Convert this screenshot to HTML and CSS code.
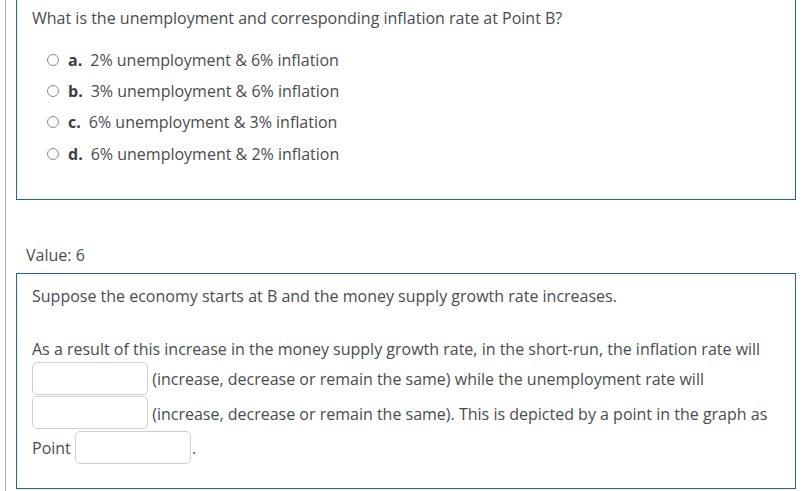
FILE: index.html
```html
<!DOCTYPE html>
<html>
<head>
<meta charset="utf-8">
<link rel="stylesheet" href="styles.css">
</head>
<body>
<div class="page">
  <div class="card card-top">
    <div class="question">What is the unemployment and corresponding inflation rate at Point B?</div>
    <div class="options">
      <div class="option"><span class="radio"></span><span class="letter">a.</span><span>2% unemployment &amp; 6% inflation</span></div>
      <div class="option"><span class="radio"></span><span class="letter">b.</span><span>3% unemployment &amp; 6% inflation</span></div>
      <div class="option"><span class="radio"></span><span class="letter">c.</span><span>6% unemployment &amp; 3% inflation</span></div>
      <div class="option"><span class="radio"></span><span class="letter">d.</span><span>6% unemployment &amp; 2% inflation</span></div>
    </div>
  </div>
  <div class="value">Value: 6</div>
  <div class="card card-bottom">
    <p class="para">Suppose the economy starts at B and the money supply growth rate increases.</p>
    <p class="para fill">As a result of this increase in the money supply growth rate, in the short-run, the inflation rate will <span class="blank"></span> (increase, decrease or remain the same) while the unemployment rate will <span class="blank"></span> (increase, decrease or remain the same). This is depicted by a point in the graph as Point <span class="blank"></span><span class="dot">.</span></p>
  </div>
</div>
</body>
</html>
```

FILE: styles.css
```css
html, body {
  margin: 0;
  padding: 0;
  background: #ffffff;
}
body {
  font-family: "Open Sans", "Liberation Sans", sans-serif;
  font-size: 16px;
  line-height: 22px;
  color: #494c4e;
}
.page {
  margin-left: 5px;
  width: 791px;
  border-left: 1px solid #a9a9a9;
  padding-left: 10px;
  min-height: 491px;
  box-sizing: border-box;
}
.card {
  width: 780px;
  box-sizing: border-box;
  border: 1px solid #1f63a1;
}
.card-top {
  border-top: none;
  padding: 7px 15px 30px 15px;
}
.question {
  height: 22px;
}
.options {
  margin-top: 15px;
  padding-left: 15px;
}
.option {
  display: flex;
  align-items: center;
  height: 31.33px;
}
.radio {
  width: 10px;
  height: 10px;
  border: 1px solid #8a8a8a;
  border-radius: 50%;
  background: #fff;
  margin-right: 9px;
  flex: none;
}
.letter {
  font-weight: 700;
  color: #3c3e40;
  margin-right: 8px;
}
.value {
  margin: 44px 0 7px 10px;
  height: 22px;
}
.card-bottom {
  padding: 11px 15px 24px 15px;
}
.para {
  margin: 0;
}
.para + .para {
  margin-top: 31px;
}
.blank {
  display: inline-block;
  width: 116px;
  height: 33px;
  box-sizing: border-box;
  border: 1px solid #cfcfcf;
  border-radius: 5px;
  background: #fff;
  vertical-align: -10px;
  margin: 1.5px 0 0 0;
}
.dot {
  margin-left: 1px;
}
```
